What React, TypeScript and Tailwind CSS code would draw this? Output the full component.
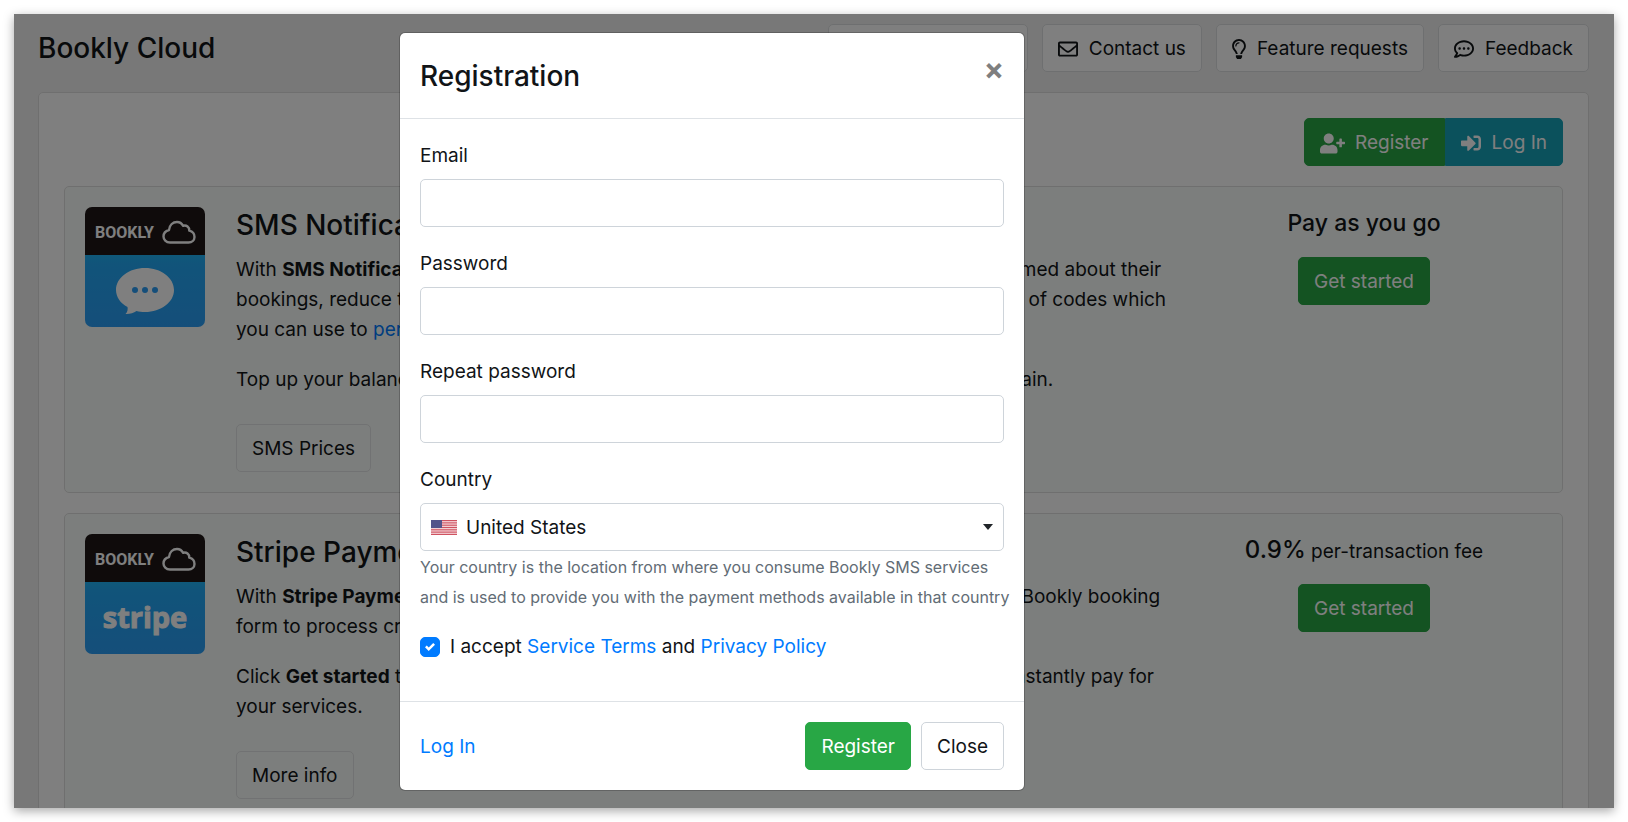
import { useState } from "react";
import {
    FaRegEnvelope,
    FaRegLightbulb,
    FaRegCommentDots,
    FaRegQuestionCircle,
    FaUserPlus,
    FaSignInAlt,
} from "react-icons/fa";
import clsx from "clsx";
import type { ReactNode } from "react";

const btn = "h-12 px-[15px] pt-0.5 rounded-[5px] border leading-[30px] whitespace-nowrap cursor-pointer";

function ProductLogo({ children }: { children: ReactNode }) {
    return (
        <svg viewBox="0 0 120 120" className="size-[120px] shrink-0" aria-hidden="true">
            <defs>
                <linearGradient id="logoBlue" x1="0" y1="0" x2="0" y2="1">
                    <stop offset="0" stopColor="#1fb2f4" />
                    <stop offset="0.12" stopColor="#22a8f4" />
                    <stop offset="1" stopColor="#2a9df4" />
                </linearGradient>
                <clipPath id="logoClip">
                    <rect width="120" height="120" rx="7" />
                </clipPath>
            </defs>
            <g clipPath="url(#logoClip)">
                <rect width="120" height="48" fill="#1e1717" />
                <rect y="48" width="120" height="72" fill="url(#logoBlue)" />
            </g>
            <text x="10" y="31" fontSize="16" fontWeight="700" fill="#fff" className="font-['Roboto',sans-serif]">
                BOOKLY
            </text>
            <path
                d="M85 35.500C81 35.500 78.500 32.500 78.500 29.500 78.500 26.500 80.500 24 84 23 84.500 18 88 15 92 15 94.500 15 96.800 16.500 98 18.800 101.500 17.800 104.500 20 104.300 23.700 107.500 24.500 109.500 27 109.500 30 109.500 33 107 35.500 103.500 35.500z"
                fill="none"
                stroke="#fff"
                strokeWidth="2.400"
                strokeLinejoin="round"
            />
            {children}
        </svg>
    );
}

function ProductCard({
    logo,
    title,
    price,
    action,
    children,
}: {
    logo: ReactNode;
    title: string;
    price: ReactNode;
    action: string;
    children: ReactNode;
}) {
    return (
        <section className="flex p-5 border border-[#dfdfdf] rounded-[5px] bg-[#f9fdfa]">
            <ProductLogo>{logo}</ProductLogo>
            <div className="flex-1 ml-[31px] min-w-0">
                <h2 className="text-[28px] leading-9 font-medium mb-3">{title}</h2>
                <div className="space-y-5 mb-[29px]">{children}</div>
                <button className={clsx(btn, "border-[#e2e4e6]")}>{action}</button>
            </div>
            <div className="w-[356px] ml-8 text-center">
                <div className="h-[30px] mb-5 leading-8">{price}</div>
                <button className={clsx(btn, "bg-[#28a745] border-[#28a745] text-white")}>Get started</button>
            </div>
        </section>
    );
}

function UsFlag() {
    return (
        <svg viewBox="0 0 26 15" className="w-[26px] h-[15px]" aria-hidden="true">
            <rect width="26" height="15" fill="#f6dadd" />
            {[0, 1, 2, 3, 4, 5, 6].map((i) => (
                <rect key={i} y={(i * 30) / 13} width="26" height={15 / 13} fill="#cf5361" />
            ))}
            <rect width="11" height="8" fill="#54548a" />
        </svg>
    );
}

function Field({ id, label, type }: { id: string; label: string; type: string }) {
    return (
        <div className="mb-[22px]">
            <label htmlFor={id} className="block mb-2">
                {label}
            </label>
            <input
                id={id}
                type={type}
                className="block w-full h-12 px-3 border border-[#ced4da] rounded-[5px] outline-none"
            />
        </div>
    );
}

function RegistrationModal() {
    const [accepted, setAccepted] = useState(true);

    return (
        <div
            role="dialog"
            aria-labelledby="modal-title"
            className="w-[626px] bg-white bg-clip-padding border border-black/20 rounded-[6px]"
        >
            <div className="flex items-start justify-between px-5 pt-5 pb-[19px] border-b border-[#dee2e6]">
                <h2 id="modal-title" className="text-[28px] leading-[46px] font-medium">
                    Registration
                </h2>
                <button aria-label="Close" className="text-[30px] leading-8 font-bold text-[#7f7f7f]">
                    ×
                </button>
            </div>

            <div className="px-5 pt-[22px] pb-5">
                <Field id="email" label="Email" type="email" />
                <Field id="password" label="Password" type="password" />
                <Field id="repeat" label="Repeat password" type="password" />

                <label htmlFor="country" className="block mb-2">
                    Country
                </label>
                <div className="relative">
                    <select
                        id="country"
                        className="block w-full h-12 pl-[45px] pr-8 pt-0.5 appearance-none bg-white border border-[#ced4da] rounded-[5px]"
                    >
                        <option>United States</option>
                    </select>
                    <span className="absolute left-[11px] inset-y-0 flex items-center pointer-events-none">
                        <UsFlag />
                    </span>
                    <span className="absolute right-[11px] inset-y-0 flex items-center pointer-events-none">
                        <svg viewBox="0 0 10 6" className="w-[10px] h-[6px]" aria-hidden="true">
                            <path d="M0 0h10L5 6z" fill="#212529" />
                        </svg>
                    </span>
                </div>
                <p className="pt-px text-[16px] leading-[30px] whitespace-nowrap text-[#626c75]">
                    Your country is the location from where you consume Bookly SMS services
                    <br />
                    and is used to provide you with the payment methods available in that country
                </p>

                <div className="flex items-center gap-[10px] mt-5 mb-[19px]">
                    <span className="relative size-5">
                        <input
                            id="terms"
                            type="checkbox"
                            checked={accepted}
                            onChange={() => setAccepted(!accepted)}
                            className="block size-5 appearance-none border border-[#adb5bd] rounded-[5px] checked:bg-[#007bff] checked:border-[#007bff]"
                        />
                        {accepted && (
                            <svg viewBox="0 0 8 8" className="absolute inset-[5px] size-[10px] pointer-events-none">
                                <path
                                    fill="#fff"
                                    d="M6.564.75l-3.590 3.612-1.538-1.550L0 4.260 2.974 7.250 8 2.193z"
                                />
                            </svg>
                        )}
                    </span>
                    <label htmlFor="terms">
                        I accept <a href="#terms" className="text-[#007bff]">Service Terms</a> and{" "}
                        <a href="#privacy" className="text-[#007bff]">Privacy Policy</a>
                    </label>
                </div>
            </div>

            <div className="flex items-center gap-[10px] p-5 border-t border-[#dee2e6]">
                <a href="#login" className="text-[#007bff] mr-auto pt-0.5">
                    Log In
                </a>
                <button className={clsx(btn, "bg-[#28a745] border-[#28a745] text-white")}>Register</button>
                <button className={clsx(btn, "border-[#ced4da]")}>Close</button>
            </div>
        </div>
    );
}

const headerLinks = [
    { name: "Documentation", icon: FaRegQuestionCircle },
    { name: "Contact us", icon: FaRegEnvelope },
    { name: "Feature requests", icon: FaRegLightbulb },
    { name: "Feedback", icon: FaRegCommentDots },
];

export default function App() {
    return (
        <div className="h-screen p-[14px] bg-white font-['Inter',sans-serif] text-[19px] leading-[30px] text-[#111417]">
            <div className="relative h-full overflow-hidden bg-[#f1f1f1] shadow-[0_3px_10px_rgba(0,0,0,0.35)]">
                <div className="pl-6 pr-[25px] pt-[10px]">
                    {/* Header */}
                    <header className="flex items-center gap-[14px] mb-5">
                        <h1 className="text-[28px] font-medium mr-auto">Bookly Cloud</h1>
                        {headerLinks.map((item) => (
                            <button
                                key={item.name}
                                className={clsx(btn, "flex items-center gap-[11px] bg-white border-[#dddfe1]")}
                            >
                                <item.icon size={20} className={item.name === "Feature requests" ? "w-[14px]" : ""} />
                                {item.name}
                            </button>
                        ))}
                    </header>

                    {/* Products */}
                    <main className="p-[25px] bg-white border border-[#dfdfdf] rounded-[5px]">
                        <div className="flex justify-end mb-5">
                            <button
                                className={clsx(
                                    btn,
                                    "flex items-center gap-[10px] rounded-r-none bg-[#28a745] border-[#28a745] text-white"
                                )}
                            >
                                <FaUserPlus size={25} />
                                Register
                            </button>
                            <button
                                className={clsx(
                                    btn,
                                    "flex items-center gap-[11px] rounded-l-none bg-[#17a2b8] border-[#17a2b8] text-white"
                                )}
                            >
                                <FaSignInAlt size={20} />
                                Log In
                            </button>
                        </div>

                        <div className="space-y-5">
                            <ProductCard
                                title="SMS Notifications"
                                action="SMS Prices"
                                price={<span className="text-[23px] font-medium">Pay as you go</span>}
                                logo={
                                    <>
                                        <path
                                            d="M60 61c16 0 29 9.700 29 22s-13 22-29 22c-3 0-6-.4-8.500-1-3 2-7 3.300-11 3 2-2 2.500-4.500 2-7C35.500 96.500 31 90 31 83c0-12.300 13-22 29-22z"
                                            fill="#fff"
                                        />
                                        <circle cx="50" cy="83" r="3" fill="#2a9df4" />
                                        <circle cx="60" cy="83" r="3" fill="#2a9df4" />
                                        <circle cx="70" cy="83" r="3" fill="#2a9df4" />
                                    </>
                                }
                            >
                                <p className="whitespace-nowrap">
                                    With <b>SMS Notifications</b>, your customers and staff members will always be quickly informed about their
                                    <br />
                                    bookings, reduce the number of no-shows and get notified on time. There is a ready list of codes which
                                    <br />
                                    you can use to <a href="#personalize" className="text-[#007bff]">personalize</a> your messages.
                                </p>
                                <p>Top up your balance and activate auto-recharge, so that you never run out of credits again.</p>
                            </ProductCard>

                            <ProductCard
                                title="Stripe Payments"
                                action="More info"
                                price={
                                    <>
                                        <span className="text-[24px] font-medium">0.9%</span> per-transaction fee
                                    </>
                                }
                                logo={
                                    <text
                                        x="60"
                                        y="94"
                                        textAnchor="middle"
                                        fontSize="29"
                                        fontWeight="700"
                                        fill="#fff"
                                        stroke="#fff"
                                        className="font-['Open_Sans',sans-serif]"
                                    >
                                        stripe
                                    </text>
                                }
                            >
                                <p className="whitespace-nowrap">
                                    With <b>Stripe Payments</b>, your customers can pay online at any time. Connect it with your Bookly booking
                                    <br />
                                    form to process credit cards.
                                </p>
                                <p className="whitespace-nowrap">
                                    Click <b>Get started</b> to connect your Stripe account and let your customers securely and instantly pay for
                                    <br />
                                    your services.
                                </p>
                            </ProductCard>
                        </div>
                    </main>
                </div>

                {/* Modal */}
                <div className="absolute inset-0 flex items-start justify-center pt-[18px] pr-[204px] bg-black/50">
                    <RegistrationModal />
                </div>
            </div>
        </div>
    );
}
